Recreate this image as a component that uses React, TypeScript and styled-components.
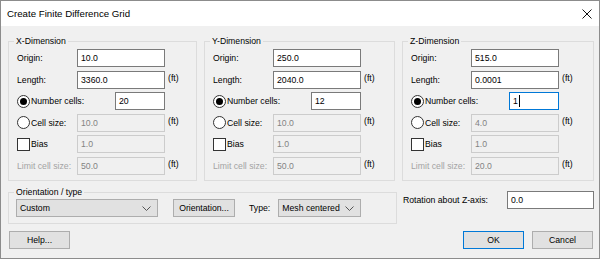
import React from 'react';
import styled, { createGlobalStyle } from 'styled-components';

const GlobalStyle = createGlobalStyle`
  html, body {
    margin: 0;
    padding: 0;
    background: #ffffff;
  }
  body {
    font-family: 'Liberation Sans', Arial, sans-serif;
    font-size: 8.7px;
    color: #000;
  }
  * {
    box-sizing: border-box;
  }
`;

const Window = styled.div`
  width: 600px;
  height: 259px;
  border: 1px solid #8c8c8c;
  background: #f0f0f0;
  display: flex;
  flex-direction: column;
  overflow: hidden;
`;

const TitleBar = styled.div`
  height: 25px;
  flex: none;
  background: #ffffff;
  display: flex;
  align-items: center;
  justify-content: space-between;
  padding: 0 7px 0 6px;
  font-size: 9.7px;
`;

const CloseButton = styled.div`
  width: 10px;
  height: 10px;
  display: flex;
`;

const Body = styled.div`
  flex: 1;
  display: flex;
  flex-direction: column;
  padding: 15px 5px 0 7px;
`;

const TopRow = styled.div`
  display: grid;
  grid-template-columns: 189px 191px 192px;
  column-gap: 7px;
  height: 140px;
`;

const GroupBox = styled.div<{ $pad?: string }>`
  position: relative;
  border: 1px solid #dcdcdc;
  padding: ${p => p.$pad || '7px 0 0 8px'};
`;

const Legend = styled.span`
  position: absolute;
  top: -6px;
  left: 5px;
  padding: 0 2px;
  line-height: 11px;
  background: #f0f0f0;
`;

const Rows = styled.div`
  display: flex;
  flex-direction: column;
  gap: 3.6px;
`;

const Row = styled.div`
  display: flex;
  align-items: center;
  height: 18px;
`;

const Label = styled.div<{ $w: number; $disabled?: boolean }>`
  width: ${p => p.$w}px;
  flex: none;
  display: flex;
  align-items: center;
  gap: 1px;
  color: ${p => (p.$disabled ? '#a3a3a3' : '#000')};
  white-space: nowrap;
`;

const TextBox = styled.div<{ $w: number; $disabled?: boolean; $focused?: boolean }>`
  width: ${p => p.$w}px;
  height: 18px;
  flex: none;
  display: flex;
  align-items: center;
  padding-left: 3px;
  border: 1px solid
    ${p => (p.$focused ? '#0078d7' : p.$disabled ? '#cccccc' : '#7a7a7a')};
  background: ${p => (p.$disabled ? '#f0f0f0' : '#ffffff')};
  color: ${p => (p.$disabled ? '#838383' : '#000')};
`;

const Caret = styled.span`
  display: inline-block;
  width: 1px;
  height: 12px;
  margin-left: 1px;
  background: #000;
`;

const Unit = styled.span`
  margin-left: 3px;
  margin-top: -3px;
`;

const Radio = styled.span<{ $checked?: boolean }>`
  width: 13px;
  height: 13px;
  flex: none;
  border-radius: 50%;
  border: 1px solid #333;
  background: #fff;
  display: flex;
  align-items: center;
  justify-content: center;

  &::after {
    content: '';
    width: 7px;
    height: 7px;
    border-radius: 50%;
    background: ${p => (p.$checked ? '#000' : 'transparent')};
  }
`;

const CheckBox = styled.span`
  width: 13px;
  height: 13px;
  flex: none;
  border: 1px solid #333;
  background: #fff;
`;

const BottomRow = styled.div`
  display: flex;
  align-items: flex-start;
  margin-top: 11px;
`;

const OrientationGroup = styled(GroupBox)`
  width: 389px;
  height: 32px;
  display: flex;
  align-items: center;
`;

const Select = styled.div<{ $w: number }>`
  width: ${p => p.$w}px;
  height: 18px;
  flex: none;
  display: flex;
  align-items: center;
  justify-content: space-between;
  padding: 0 6px 0 3px;
  background: #e1e1e1;
  border: 1px solid #adadad;
`;

const Button = styled.div<{ $w: number; $default?: boolean }>`
  width: ${p => p.$w}px;
  height: 18px;
  flex: none;
  display: flex;
  align-items: center;
  justify-content: center;
  background: #e1e1e1;
  border: 1px solid ${p => (p.$default ? '#0078d7' : '#adadad')};
`;

const InlineText = styled.span<{ $ml: number }>`
  margin-left: ${p => p.$ml}px;
`;

const Spaced = styled.div<{ $ml: number }>`
  margin-left: ${p => p.$ml}px;
  display: flex;
`;

const RotationRow = styled.div`
  flex: 1;
  display: flex;
  align-items: center;
  justify-content: space-between;
  margin: -1px 0 0 6px;
  height: 17px;
`;

const ButtonRow = styled.div`
  display: flex;
  align-items: center;
  gap: 8px;
  margin-top: 7px;
  padding: 0 1px;
`;

const Spacer = styled.div`
  flex: 1;
`;

const Chevron = () => (
  <svg width="9" height="5" viewBox="0 0 9 5">
    <path d="M0.5 0.5 L4.5 4.5 L8.5 0.5" fill="none" stroke="#555" strokeWidth="1" />
  </svg>
);

type Dim = {
  title: string;
  origin: string;
  length: string;
  cells: string;
  cellSize: string;
  limit: string;
  focused?: boolean;
};

const dims: Dim[] = [
  { title: 'X-Dimension', origin: '10.0', length: '3360.0', cells: '20', cellSize: '10.0', limit: '50.0' },
  { title: 'Y-Dimension', origin: '250.0', length: '2040.0', cells: '12', cellSize: '10.0', limit: '50.0' },
  { title: 'Z-Dimension', origin: '515.0', length: '0.0001', cells: '1', cellSize: '4.0', limit: '20.0', focused: true },
];

function DimensionGroup({ d }: { d: Dim }) {
  return (
    <GroupBox>
      <Legend>{d.title}</Legend>
      <Rows>
        <Row>
          <Label $w={60}>Origin:</Label>
          <TextBox $w={88}>{d.origin}</TextBox>
        </Row>
        <Row>
          <Label $w={60}>Length:</Label>
          <TextBox $w={88}>{d.length}</TextBox>
          <Unit>(ft)</Unit>
        </Row>
        <Row>
          <Label $w={98}>
            <Radio $checked />
            Number cells:
          </Label>
          <TextBox $w={50} $focused={d.focused}>
            {d.cells}
            {d.focused && <Caret />}
          </TextBox>
        </Row>
        <Row>
          <Label $w={60}>
            <Radio />
            Cell size:
          </Label>
          <TextBox $w={88} $disabled>{d.cellSize}</TextBox>
          <Unit>(ft)</Unit>
        </Row>
        <Row>
          <Label $w={60}>
            <CheckBox />
            Bias
          </Label>
          <TextBox $w={88} $disabled>1.0</TextBox>
        </Row>
        <Row>
          <Label $w={60} $disabled>Limit cell size:</Label>
          <TextBox $w={88} $disabled>{d.limit}</TextBox>
          <Unit>(ft)</Unit>
        </Row>
      </Rows>
    </GroupBox>
  );
}

export default function App() {
  return (
    <>
      <GlobalStyle />
      <Window>
        <TitleBar>
          <span>Create Finite Difference Grid</span>
          <CloseButton>
            <svg width="10" height="10" viewBox="0 0 10 10">
              <path d="M0.5 0.5 L9.5 9.5 M9.5 0.5 L0.5 9.5" stroke="#111" strokeWidth="1" />
            </svg>
          </CloseButton>
        </TitleBar>
        <Body>
          <TopRow>
            {dims.map(d => (
              <DimensionGroup key={d.title} d={d} />
            ))}
          </TopRow>

          <BottomRow>
            <OrientationGroup $pad="0 0 0 7px">
              <Legend>Orientation / type</Legend>
              <Select $w={142}>
                Custom
                <Chevron />
              </Select>
              <Spaced $ml={15}>
                <Button $w={62}>Orientation...</Button>
              </Spaced>
              <InlineText $ml={14}>Type:</InlineText>
              <Spaced $ml={8}>
                <Select $w={83}>
                  Mesh centered
                  <Chevron />
                </Select>
              </Spaced>
            </OrientationGroup>
            <RotationRow>
              <span>Rotation about Z-axis:</span>
              <TextBox $w={87}>0.0</TextBox>
            </RotationRow>
          </BottomRow>

          <ButtonRow>
            <Button $w={61}>Help...</Button>
            <Spacer />
            <Button $w={61} $default>OK</Button>
            <Button $w={61}>Cancel</Button>
          </ButtonRow>
        </Body>
      </Window>
    </>
  );
}
